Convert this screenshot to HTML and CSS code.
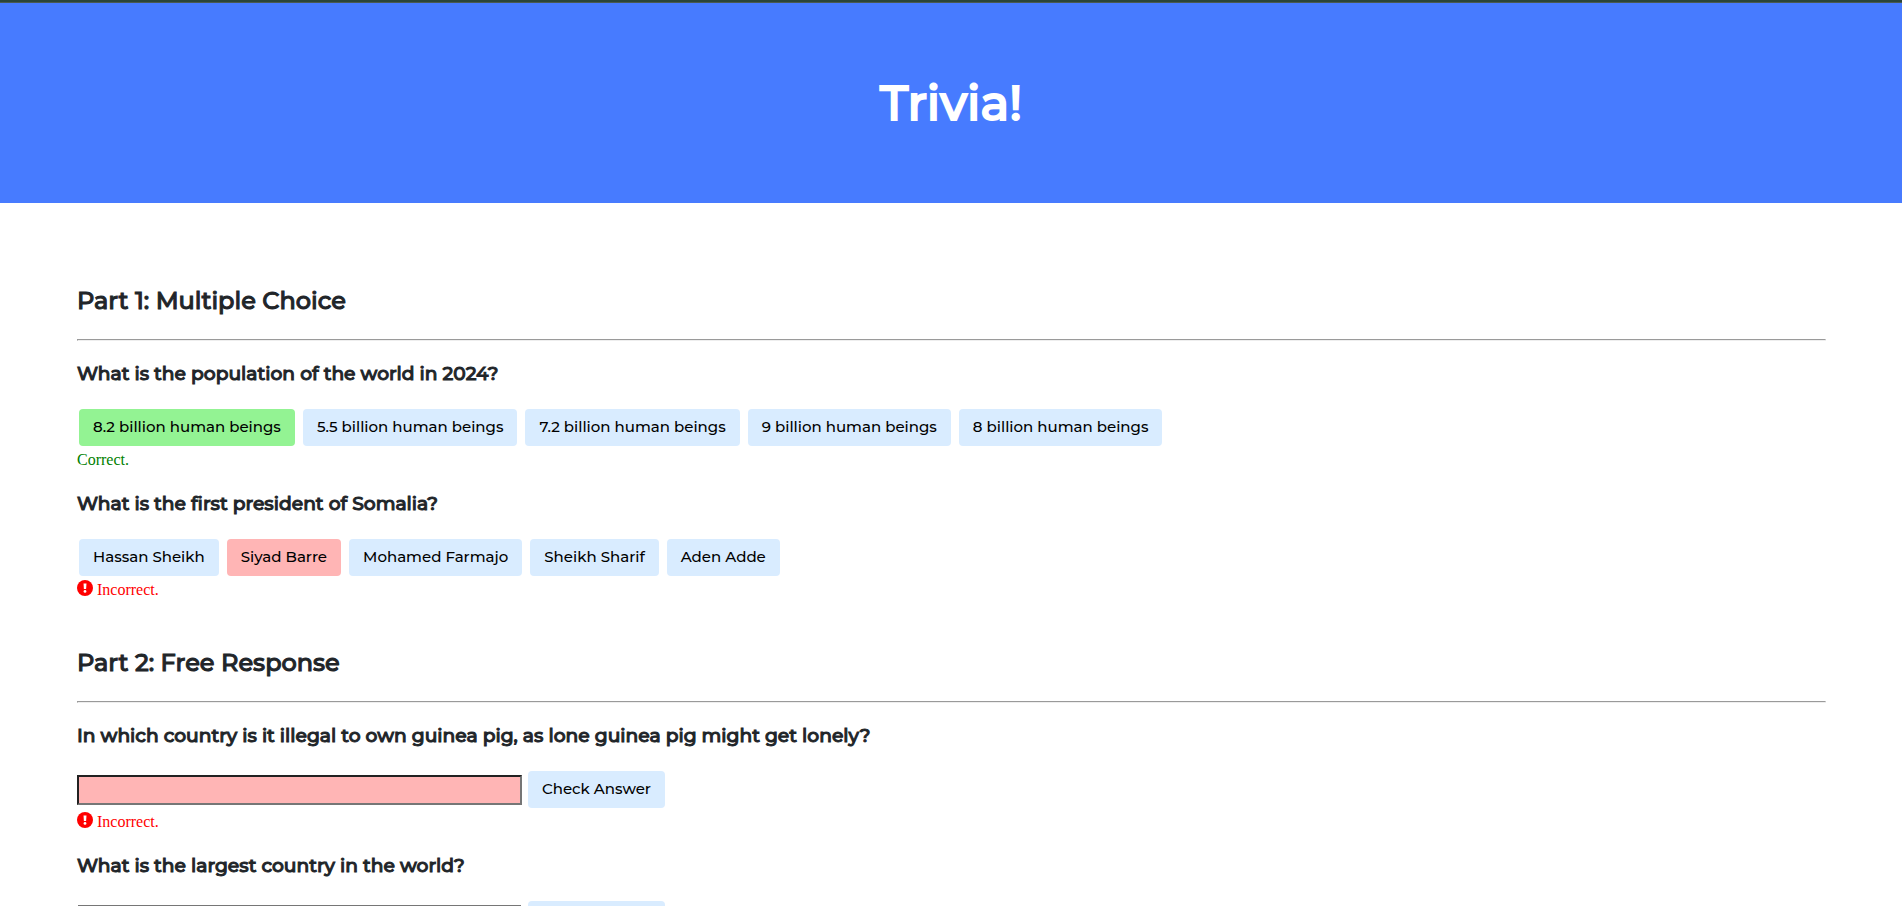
FILE: index.html
```html
<!DOCTYPE html>
<html lang="en">
<head>
  <meta charset="utf-8">
  <meta name="viewport" content="width=device-width, initial-scale=1">
  <title>Trivia!</title>
  <link rel="stylesheet" href="styles.css">
</head>
<body>
  <header class="header">
    <h1>Trivia!</h1>
  </header>
  <main class="container">
    <section class="section">
      <h2>Part 1: Multiple Choice</h2>
      <hr>
      <h3>What is the population of the world in 2024?</h3>
      <div class="choices">
        <button class="btn correct" type="button">8.2 billion human beings</button>
        <button class="btn" type="button">5.5 billion human beings</button>
        <button class="btn" type="button">7.2 billion human beings</button>
        <button class="btn" type="button">9 billion human beings</button>
        <button class="btn" type="button">8 billion human beings</button>
      </div>
      <p class="feedback right">Correct.</p>
      <h3>What is the first president of Somalia?</h3>
      <div class="choices">
        <button class="btn" type="button">Hassan Sheikh</button>
        <button class="btn incorrect" type="button">Siyad Barre</button>
        <button class="btn" type="button">Mohamed Farmajo</button>
        <button class="btn" type="button">Sheikh Sharif</button>
        <button class="btn" type="button">Aden Adde</button>
      </div>
      <p class="feedback wrong">
        <svg class="icon" viewBox="0 0 16 16" aria-hidden="true"><circle cx="8" cy="8" r="8" fill="red"/><path d="M6.5 3.5h3l-.4 5.5H6.9z" fill="#fff"/><circle cx="8" cy="11.4" r="1.4" fill="#fff"/></svg>
        Incorrect.
      </p>
    </section>
    <section class="section">
      <h2>Part 2: Free Response</h2>
      <hr>
      <h3><label for="guinea">In which country is it illegal to own guinea pig, as lone guinea pig might get lonely?</label></h3>
      <div class="response">
        <input class="incorrect" id="guinea" type="text">
        <button class="btn" type="button">Check Answer</button>
      </div>
      <p class="feedback wrong">
        <svg class="icon" viewBox="0 0 16 16" aria-hidden="true"><circle cx="8" cy="8" r="8" fill="red"/><path d="M6.5 3.5h3l-.4 5.5H6.9z" fill="#fff"/><circle cx="8" cy="11.4" r="1.4" fill="#fff"/></svg>
        Incorrect.
      </p>
      <h3><label for="largest">What is the largest country in the world?</label></h3>
      <div class="response">
        <input id="largest" type="text">
        <button class="btn" type="button">Check Answer</button>
      </div>
    </section>
  </main>
</body>
</html>
```
FILE: styles.css
```css
* {
  box-sizing: border-box;
}

html {
  scrollbar-width: none;
}

body {
  margin: 0;
  background: #fff;
  color: #212529;
  font-family: "Liberation Serif", "Times New Roman", serif;
  font-size: 16px;
}

h1,
h2,
h3,
.btn {
  font-family: Montserrat, Inter, sans-serif;
  font-weight: 500;
}

h1,
h2,
h3 {
  -webkit-text-stroke: 1px currentColor;
}

.header {
  padding: 65px 32px 64px;
  border-top: 2px solid #2b4538;
  background: #477bff;
  box-shadow: inset 0 1px #4a5a50;
  color: #fff;
  text-align: center;
}

.header h1 {
  margin: 0;
  font-size: 48px;
  line-height: 72px;
  -webkit-text-stroke: 2px currentColor;
}

.container {
  padding: 64px 76px 32px 77px;
}

.section {
  padding-bottom: 9px;
}

.section h2 {
  margin: 16px 0 20px;
  font-size: 24px;
  line-height: 36px;
}

.section hr {
  margin: 0;
  border: 1px solid;
  border-color: #9a9a9a #eee #eee #9a9a9a;
}

.section h3 {
  margin: 19px 0 21px;
  line-height: 28px;
}

.choices {
  display: flex;
  flex-wrap: wrap;
  gap: 8px;
  padding-left: 2px;
}

.response {
  display: flex;
  align-items: center;
  gap: 6px;
}

.response input {
  width: 445px;
  height: 30px;
  font-size: 16px;
}

.btn {
  padding: 8px 14px 9px;
  border: 0;
  border-radius: 4px;
  background: #d9ecff;
  color: #000;
  font-size: 15px;
  line-height: 20px;
}

.correct {
  background: #93f393;
}

.incorrect {
  background: #ffb5b5;
}

.feedback {
  display: flex;
  gap: 4px;
  margin: 4px 0 20px;
  line-height: 20px;
}

.right {
  color: green;
}

.wrong {
  color: red;
}

.icon {
  width: 16px;
  height: 16px;
}
```
